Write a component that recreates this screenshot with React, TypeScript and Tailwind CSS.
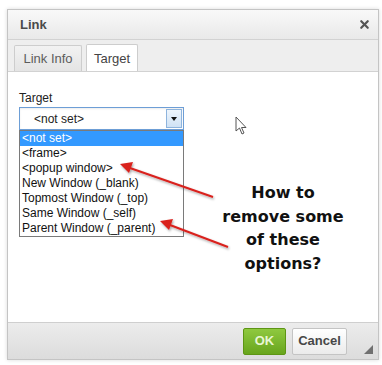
import { X } from "lucide-react";

const options = [
  "<not set>",
  "<frame>",
  "<popup window>",
  "New Window (_blank)",
  "Topmost Window (_top)",
  "Same Window (_self)",
  "Parent Window (_parent)",
];

function Annotations() {
  // red callout arrows + mouse cursor drawn over the dialog
  return (
    <svg
      className="pointer-events-none absolute left-0 top-0"
      width={382}
      height={365}
      viewBox="0 0 382 365"
    >
      <defs>
        <filter id="sh" x="-20%" y="-20%" width="140%" height="140%">
          <feDropShadow dx="1" dy="1.5" stdDeviation="1" floodColor="#000" floodOpacity="0.35" />
        </filter>
      </defs>
      <g filter="url(#sh)" stroke="#d9201e" fill="#d9201e" strokeWidth="2">
        <line x1="213" y1="197" x2="130" y2="168" />
        <polygon points="120,164 133,162 129,173" stroke="none" />
        <line x1="228" y1="247" x2="170" y2="225" />
        <polygon points="160,221 173,219 169,230" stroke="none" />
      </g>
      <path
        d="M236 117 L236 131 L239.5 128 L242 134 L244 133 L241.5 127.5 L246 127.5 Z"
        fill="#fff"
        stroke="#555"
        strokeWidth="1"
        strokeLinejoin="round"
      />
    </svg>
  );
}

export default function App() {
  return (
    <div className="relative h-[365px] w-[382px] overflow-hidden bg-white pl-[7px] pt-[9px] font-['Liberation_Sans',Arial,sans-serif]">
      <div className="flex h-[351px] w-[372px] flex-col border border-[#c4c4c4] shadow-[0_0_4px_rgba(0,0,0,0.15)]">
        {/* Title bar */}
        <div className="flex h-[30px] items-center justify-between border-b border-[#d2d2d2] bg-gradient-to-b from-[#f9f9f9] to-[#e9e9e9] pl-[12px] pr-[7px]">
          <span className="text-[13px] font-bold text-[#4a4a4a]">Link</span>
          <X className="h-[13px] w-[13px] text-[#555]" strokeWidth={4} />
        </div>

        {/* Tabs */}
        <div className="flex h-[31px] items-end gap-[4px] bg-[#eeeeee] pl-[6px]">
          <div className="flex h-[26px] w-[68px] items-center justify-center rounded-t-[2px] border border-b-0 border-[#cdcdcd] bg-gradient-to-b from-[#f2f2f2] to-[#e4e4e4] text-[13px] text-[#5c5c5c]">
            Link Info
          </div>
          <div className="-mb-px flex h-[28px] w-[52px] items-center justify-center rounded-t-[2px] border border-b-0 border-[#cdcdcd] bg-white text-[13px] text-[#444]">
            Target
          </div>
        </div>

        {/* Body */}
        <div className="relative flex-1 border-t border-[#d2d2d2] bg-white pl-[11px] pt-[19px]">
          <div className="text-[12px] leading-[14px] text-[#222]">Target</div>
          <div className="mt-[2px] flex h-[23px] w-[165px] items-center border border-[#6d9ed6] bg-white shadow-[inset_0_1px_2px_rgba(0,0,0,0.08)]">
            <span className="flex-1 pl-[14px] text-[12px] text-[#222]">&lt;not set&gt;</span>
            <div className="mr-[1px] flex h-[19px] w-[16px] items-center justify-center border border-[#8eb4dd] bg-gradient-to-b from-[#eef5fc] to-[#cfe2f5]">
              <div className="h-0 w-0 border-x-[3.5px] border-t-[4px] border-x-transparent border-t-[#111]" />
            </div>
          </div>
          <div className="w-[165px] border border-[#7a7a7a] bg-white">
            {options.map((opt, i) => (
              <div
                key={opt}
                className={
                  i === 0
                    ? "h-[15px] bg-[#3399ff] pl-[2px] text-[12px] leading-[15px] text-white"
                    : "h-[15px] pl-[2px] text-[12px] leading-[15px] text-[#111]"
                }
              >
                {opt}
              </div>
            ))}
          </div>

          <div className="absolute left-[196px] top-[109px] w-[158px] text-center font-['DejaVu_Sans',Verdana,sans-serif] text-[16px] font-bold leading-[23.5px] text-[#111]">
            How to
            <br />
            remove some
            <br />
            of these
            <br />
            options?
          </div>
        </div>

        {/* Footer */}
        <div className="relative flex h-[37px] items-center justify-end gap-[6px] border-t border-[#cfcfcf] bg-gradient-to-b from-[#ececec] to-[#dcdcdc] pr-[31px]">
          <button
            type="button"
            className="h-[27px] w-[43px] rounded-[2px] border border-[#5d9514] bg-gradient-to-b from-[#8fc93f] to-[#68a51c] text-[13px] font-bold text-[#e8f6d4]"
          >
            OK
          </button>
          <button
            type="button"
            className="h-[27px] w-[55px] rounded-[2px] border border-[#c4c4c4] bg-gradient-to-b from-white to-[#ebebeb] text-[13px] font-bold text-[#474747]"
          >
            Cancel
          </button>
          <div className="absolute bottom-[5px] right-[5px] h-0 w-0 border-b-[9px] border-l-[9px] border-b-[#707070] border-l-transparent" />
        </div>
      </div>
      <Annotations />
    </div>
  );
}
